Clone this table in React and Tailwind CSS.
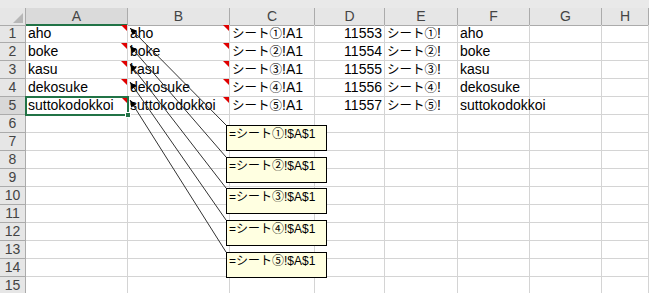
import React from 'react';

const GRID = 'grid grid-cols-[26px_102px_102px_85px_70px_73px_72px_72px_1fr]';
const LETTERS = ['A', 'B', 'C', 'D', 'E', 'F', 'G', 'H'];
const NAMES = ['aho', 'boke', 'kasu', 'dekosuke', 'suttokodokkoi'];
const MARKS = ['①', '②', '③', '④', '⑤'];
const BOX_TOPS = [125, 157, 188, 220, 252];

const J = ({ children }) => <span className="text-[12.5px]">{children}</span>;

const RedMark = () => (
  <span className="absolute top-0 right-0 w-0 h-0 border-l-[6px] border-l-transparent border-t-[6px] border-t-[#e00000]" />
);

const Cell = ({ children, className = '', mark = false }) => (
  <div className={`relative h-[18px] border-r border-b border-[#d4d4d4] px-[2px] leading-[17px] whitespace-nowrap ${className}`}>
    {children}
    {mark && <RedMark />}
  </div>
);

const Arrows = () => {
  const lines = BOX_TOPS.map((by, i) => {
    const sx = 130, sy = 28 + i * 18, ex = 226, ey = by;
    const dx = ex - sx, dy = ey - sy;
    const len = Math.hypot(dx, dy);
    const ux = dx / len, uy = dy / len;
    const bx = sx + ux * 7, byy = sy + uy * 7;
    const pts = `${sx},${sy} ${bx - uy * 3},${byy + ux * 3} ${bx + uy * 3},${byy - ux * 3}`;
    return { sx, sy, ex, ey, pts };
  });
  return (
    <svg className="absolute inset-0" width="649" height="293">
      {lines.map((l, i) => (
        <g key={i}>
          <line x1={l.sx} y1={l.sy} x2={l.ex} y2={l.ey} stroke="#333" strokeWidth="1" />
          <polygon points={l.pts} fill="#000" />
        </g>
      ))}
    </svg>
  );
};

export default function App() {
  return (
    <div className="relative w-[649px] h-[293px] overflow-hidden bg-white text-black text-[14px] font-['Liberation_Sans','Noto_Sans_CJK_JP',sans-serif]">
      <div className="h-[8px] bg-[#e9e9e9]" />

      {/* column headers */}
      <div className={`${GRID} h-[17px] bg-[#e6e6e6] text-[#444] leading-[16px]`}>
        <div className="relative border-r border-b border-[#ababab]">
          <span className="absolute right-[2px] bottom-[2px] w-0 h-0 border-l-[10px] border-l-transparent border-b-[10px] border-b-[#b7b7b7]" />
        </div>
        {LETTERS.map((c, i) => (
          <div
            key={c}
            className={
              i === 0
                ? 'text-center border-r border-[#ababab] bg-[#dadada] border-b-2 border-b-[#217346]'
                : 'text-center border-r border-b border-[#ababab]'
            }
          >
            {c}
          </div>
        ))}
      </div>

      {/* rows */}
      {Array.from({ length: 15 }, (_, r) => {
        const n = r + 1;
        const has = r < 5;
        return (
          <div key={n} className={GRID}>
            <div
              className={`h-[18px] border-r border-b border-[#ababab] text-center leading-[17px] text-[#444] ${
                n === 5 ? 'bg-[#d8d8d8]' : 'bg-[#e6e6e6]'
              }`}
            >
              {n}
            </div>
            <Cell mark={has}>{has && NAMES[r]}</Cell>
            <Cell mark={has}>{has && NAMES[r]}</Cell>
            <Cell>{has && <><J>シート{MARKS[r]}</J>!A1</>}</Cell>
            <Cell className="text-right">{has && 11553 + r}</Cell>
            <Cell>{has && <><J>シート{MARKS[r]}</J>!</>}</Cell>
            <Cell>{has && NAMES[r]}</Cell>
            <Cell />
            <Cell />
          </div>
        );
      })}

      {/* selection on A5 */}
      <div className="absolute left-[25px] top-[96px] w-[104px] h-[20px] border-2 border-[#217346] pointer-events-none">
        <span className="absolute -right-[4px] -bottom-[4px] w-[6px] h-[6px] bg-[#217346] border border-white" />
      </div>

      <Arrows />

      {/* comment boxes */}
      {BOX_TOPS.map((t, i) => (
        <div
          key={t}
          style={{ top: t }}
          className="absolute left-[226px] w-[101px] h-[26px] bg-[#ffffe1] border border-black px-[2px] pt-[1px] text-[12px] leading-[15px] whitespace-nowrap"
        >
          =シート{MARKS[i]}!$A$1
        </div>
      ))}
    </div>
  );
}
